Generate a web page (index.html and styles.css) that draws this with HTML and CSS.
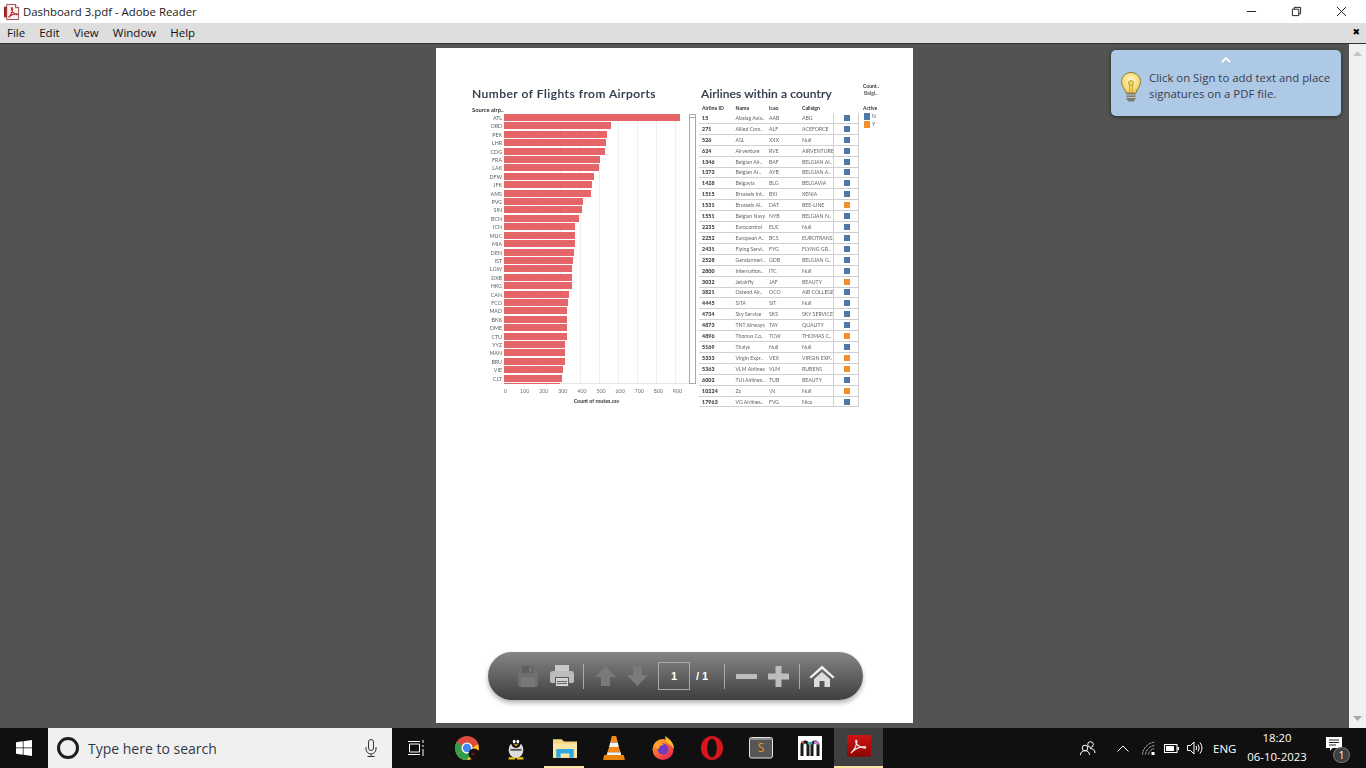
FILE: index.html
```html
<!DOCTYPE html>
<html lang="en">
<head>
<meta charset="utf-8">
<title>Dashboard 3.pdf - Adobe Reader</title>
<link rel="stylesheet" href="styles.css">
</head>
<body>
<header class="titlebar">
  <svg class="app-icon" viewBox="0 0 18 18"><path d="M3 .5h10l3.500 3.500v13.500H3z" fill="#f4f1ee" stroke="#8e3a38"/><path d="M13 .5v3.500h3.500" fill="#fff" stroke="#8e3a38"/><path d="M0 3h3v12H0z" fill="#a32020"/><path d="M5 15c2-1 3.500-5 4.500-9 0-2-1-3-1-1 0 3 2.500 6 6 7 1 0 1-1 0-1-3 0-6 1-8.500 3-1 1-1 1-1 1z" fill="none" stroke="#c0262a" stroke-width="1.300"/></svg>
  <span class="doc-title">Dashboard 3.pdf - Adobe Reader</span>
  <div class="winctl">
    <svg viewBox="0 0 12 12"><path d="M1 6h10" stroke="#111" fill="none"/></svg>
    <svg viewBox="0 0 12 12"><path d="M1.500 3.500h7v7h-7zM3.500 3.500v-2h7v7h-2" stroke="#111" fill="none"/></svg>
    <svg viewBox="0 0 12 12"><path d="M1 1l10 10M11 1L1 11" stroke="#111" fill="none"/></svg>
  </div>
</header>
<nav class="menubar">
  <span>File</span><span>Edit</span><span>View</span><span>Window</span><span>Help</span>
  <b class="menu-close">&#10006;</b>
</nav>
<main class="workspace">
  <div class="docarea">
    <section class="page">
      <div class="dash">
        <div class="chart">
          <h2 class="dash-title">Number of Flights from Airports</h2>
          <div class="field-label">Source airp..</div>
          <div class="chart-body">
            <div class="plot-wrap">
              <div class="grid"><i></i><i></i><i></i><i></i><i></i><i></i><i></i><i></i><i></i></div>
              <div class="rows">
                <div class="row"><span class="code">ATL</span><span class="bar" style="width:176px"></span></div>
                <div class="row"><span class="code">ORD</span><span class="bar" style="width:107px"></span></div>
                <div class="row"><span class="code">PEK</span><span class="bar" style="width:103px"></span></div>
                <div class="row"><span class="code">LHR</span><span class="bar" style="width:102px"></span></div>
                <div class="row"><span class="code">CDG</span><span class="bar" style="width:101px"></span></div>
                <div class="row"><span class="code">FRA</span><span class="bar" style="width:96px"></span></div>
                <div class="row"><span class="code">LAX</span><span class="bar" style="width:95px"></span></div>
                <div class="row"><span class="code">DFW</span><span class="bar" style="width:90px"></span></div>
                <div class="row"><span class="code">JFK</span><span class="bar" style="width:88px"></span></div>
                <div class="row"><span class="code">AMS</span><span class="bar" style="width:87px"></span></div>
                <div class="row"><span class="code">PVG</span><span class="bar" style="width:79px"></span></div>
                <div class="row"><span class="code">SIN</span><span class="bar" style="width:78px"></span></div>
                <div class="row"><span class="code">BCN</span><span class="bar" style="width:75px"></span></div>
                <div class="row"><span class="code">ICN</span><span class="bar" style="width:71px"></span></div>
                <div class="row"><span class="code">MUC</span><span class="bar" style="width:71px"></span></div>
                <div class="row"><span class="code">MIA</span><span class="bar" style="width:71px"></span></div>
                <div class="row"><span class="code">DEN</span><span class="bar" style="width:70px"></span></div>
                <div class="row"><span class="code">IST</span><span class="bar" style="width:69px"></span></div>
                <div class="row"><span class="code">LGW</span><span class="bar" style="width:68px"></span></div>
                <div class="row"><span class="code">DXB</span><span class="bar" style="width:68px"></span></div>
                <div class="row"><span class="code">HKG</span><span class="bar" style="width:68px"></span></div>
                <div class="row"><span class="code">CAN</span><span class="bar" style="width:65px"></span></div>
                <div class="row"><span class="code">FCO</span><span class="bar" style="width:64px"></span></div>
                <div class="row"><span class="code">MAD</span><span class="bar" style="width:63px"></span></div>
                <div class="row"><span class="code">BKK</span><span class="bar" style="width:63px"></span></div>
                <div class="row"><span class="code">DME</span><span class="bar" style="width:63px"></span></div>
                <div class="row"><span class="code">CTU</span><span class="bar" style="width:63px"></span></div>
                <div class="row"><span class="code">YYZ</span><span class="bar" style="width:61px"></span></div>
                <div class="row"><span class="code">MAN</span><span class="bar" style="width:61px"></span></div>
                <div class="row"><span class="code">BRU</span><span class="bar" style="width:61px"></span></div>
                <div class="row"><span class="code">VIE</span><span class="bar" style="width:59px"></span></div>
                <div class="row"><span class="code">CLT</span><span class="bar" style="width:58px"></span></div>
                <div class="row"><span class="code"></span><span class="bar" style="width:56px"></span></div>
              </div>
            </div>
            <div class="chart-scroll"><i></i></div>
          </div>
          <div class="axis"><span>0</span><span>100</span><span>200</span><span>300</span><span>400</span><span>500</span><span>600</span><span>700</span><span>800</span><span>900</span></div>
          <div class="axis-title">Count of routes.csv</div>
        </div>
        <div class="airlines">
          <h2 class="dash-title table-title">Airlines within a country</h2>
          <div class="tr thead"><span>Airline ID</span><span>Name</span><span>Icao</span><span>Callsign</span><span></span></div>
          <div class="tbody">
            <div class="tr"><b>15</b><span>Abelag Avia..</span><span>AAB</span><span>ABG</span><span class="cell-mark"><i class="mark n"></i></span></div>
            <div class="tr"><b>271</b><span>Allied Com..</span><span>ALF</span><span>ACEFORCE</span><span class="cell-mark"><i class="mark n"></i></span></div>
            <div class="tr"><b>526</b><span>ASL</span><span>XXX</span><span>Null</span><span class="cell-mark"><i class="mark n"></i></span></div>
            <div class="tr"><b>624</b><span>Airventure</span><span>RVE</span><span>AIRVENTURE</span><span class="cell-mark"><i class="mark n"></i></span></div>
            <div class="tr"><b>1346</b><span>Belgian Air..</span><span>BAF</span><span>BELGIAN AI..</span><span class="cell-mark"><i class="mark n"></i></span></div>
            <div class="tr"><b>1373</b><span>Belgian Ar..</span><span>AYB</span><span>BELGIAN A..</span><span class="cell-mark"><i class="mark n"></i></span></div>
            <div class="tr"><b>1428</b><span>Belgavia</span><span>BLG</span><span>BELGAVIA</span><span class="cell-mark"><i class="mark n"></i></span></div>
            <div class="tr"><b>1515</b><span>Brussels Int..</span><span>BXI</span><span>XENIA</span><span class="cell-mark"><i class="mark n"></i></span></div>
            <div class="tr"><b>1531</b><span>Brussels Al..</span><span>DAT</span><span>BEE-LINE</span><span class="cell-mark"><i class="mark y"></i></span></div>
            <div class="tr"><b>1551</b><span>Belgian Navy</span><span>NYB</span><span>BELGIAN N..</span><span class="cell-mark"><i class="mark n"></i></span></div>
            <div class="tr"><b>2235</b><span>Eurocontrol</span><span>EUC</span><span>Null</span><span class="cell-mark"><i class="mark n"></i></span></div>
            <div class="tr"><b>2252</b><span>European A..</span><span>BCS</span><span>EUROTRANS</span><span class="cell-mark"><i class="mark n"></i></span></div>
            <div class="tr"><b>2431</b><span>Flying Servi..</span><span>FYG</span><span>FLYING GR..</span><span class="cell-mark"><i class="mark n"></i></span></div>
            <div class="tr"><b>2528</b><span>Gendarmeri..</span><span>GDB</span><span>BELGIAN G..</span><span class="cell-mark"><i class="mark n"></i></span></div>
            <div class="tr"><b>2800</b><span>Internation..</span><span>ITC</span><span>Null</span><span class="cell-mark"><i class="mark n"></i></span></div>
            <div class="tr"><b>3032</b><span>Jetairfly</span><span>JAF</span><span>BEAUTY</span><span class="cell-mark"><i class="mark y"></i></span></div>
            <div class="tr"><b>3821</b><span>Ostend Air..</span><span>OCO</span><span>AIR COLLEGE</span><span class="cell-mark"><i class="mark n"></i></span></div>
            <div class="tr"><b>4445</b><span>SITA</span><span>SIT</span><span>Null</span><span class="cell-mark"><i class="mark n"></i></span></div>
            <div class="tr"><b>4734</b><span>Sky Service</span><span>SKS</span><span>SKY SERVICE</span><span class="cell-mark"><i class="mark n"></i></span></div>
            <div class="tr"><b>4873</b><span>TNT Airways</span><span>TAY</span><span>QUALITY</span><span class="cell-mark"><i class="mark n"></i></span></div>
            <div class="tr"><b>4896</b><span>Thomas Co..</span><span>TCW</span><span>THOMAS C..</span><span class="cell-mark"><i class="mark y"></i></span></div>
            <div class="tr"><b>5169</b><span>Thalys</span><span>Null</span><span>Null</span><span class="cell-mark"><i class="mark n"></i></span></div>
            <div class="tr"><b>5333</b><span>Virgin Expr..</span><span>VEX</span><span>VIRGIN EXP..</span><span class="cell-mark"><i class="mark y"></i></span></div>
            <div class="tr"><b>5363</b><span>VLM Airlines</span><span>VLM</span><span>RUBENS</span><span class="cell-mark"><i class="mark y"></i></span></div>
            <div class="tr"><b>6002</b><span>TUI Airlines..</span><span>TUB</span><span>BEAUTY</span><span class="cell-mark"><i class="mark n"></i></span></div>
            <div class="tr"><b>10224</b><span>Zz</span><span>\N</span><span>Null</span><span class="cell-mark"><i class="mark y"></i></span></div>
            <div class="tr"><b>17963</b><span>VG Airlines..</span><span>FVG</span><span>Nico</span><span class="cell-mark"><i class="mark n"></i></span></div>
          </div>
        </div>
        <aside class="legend">
          <div class="legend-count">Count..</div>
          <div class="legend-country">Belgi..</div>
          <div class="legend-head">Active</div>
          <div class="legend-item"><i class="swatch n"></i>N</div>
          <div class="legend-item"><i class="swatch y"></i>Y</div>
        </aside>
      </div>

      <div class="reader-bar">
        <svg class="tb save" viewBox="0 0 20 21"><path d="M0 2q0-2 2-2h14l4 4v15q0 2-2 2H2q-2 0-2-2z" fill="#6e6e6e"/><path d="M4 0h11v7H4z" fill="#5f5f5f"/><path d="M11 1h3v5h-3z" fill="#747474"/><path d="M3 11h14v10H3z" fill="#777"/></svg>
        <svg class="tb print" viewBox="0 0 24 22"><path d="M5 0h14v8H5z" fill="#c9c9c9"/><path d="M3 6h18q3 0 3 3v7q0 2-3 2H3q-3 0-3-2V9q0-3 3-3z" fill="#bcbcbc"/><path d="M5 12h14v10H5z" fill="#5a5a5a"/><path d="M6 13h12v8H6z" fill="#d2d2d2"/><path d="M7 16h10v1H7zM7 18h10v1H7z" fill="#666"/></svg>
        <i class="tb-sep"></i>
        <svg class="tb arrow" viewBox="0 0 21 20"><path d="M10.500 0L21 11h-6v9H6v-9H0z" fill="#7a7a7a"/></svg>
        <svg class="tb arrow" viewBox="0 0 21 20"><path d="M6 0h9v9h6L10.500 20 0 9h6z" fill="#7a7a7a"/></svg>
        <span class="page-box">1</span>
        <span class="page-total"><b>/</b> 1</span>
        <i class="tb-sep"></i>
        <svg class="tb zoom-out" viewBox="0 0 21 5"><path d="M0 0h21v5H0z" fill="#bdbdbd"/></svg>
        <svg class="tb zoom-in" viewBox="0 0 21 21"><path d="M7.500 0h6v7.500H21v6h-7.500V21h-6v-7.500H0v-6h7.500z" fill="#bdbdbd"/></svg>
        <i class="tb-sep"></i>
        <svg class="tb home" viewBox="0 0 26 22"><path d="M13 .500L25.500 12l-1.500 1.500L13 4 2 13.500.5 12z" fill="#f0f0f0"/><path d="M13 7l8 7v8h-5.500v-6h-5v6H5v-8z" fill="#dcdcdc"/></svg>
      </div>
    </section>
  </div>
  <div class="vscroll">
    <svg viewBox="0 0 9 6"><path d="M0 6l4.500-5L9 6z" fill="#c4c4c4"/></svg>
    <svg viewBox="0 0 9 6"><path d="M0 0l4.500 5L9 0z" fill="#a8a8a8"/></svg>
  </div>

  <aside class="tip">
    <svg class="tip-chevron" viewBox="0 0 10 6"><path d="M1 5l4-4 4 4" fill="none" stroke="#fff" stroke-width="1.800"/></svg>
    <div class="tip-body">
      <svg class="bulb" viewBox="0 0 20 30"><defs><radialGradient id="bg" cx=".5" cy=".4" r=".6"><stop offset="0" stop-color="#fffbd0"/><stop offset="1" stop-color="#f2cb52"/></radialGradient></defs><path d="M10 .5c5 0 9.500 3.500 9.500 9 0 5-3.500 7-4.500 11.500H5C4 16.500.5 14.500.5 9.500c0-5.500 4.500-9 9.500-9z" fill="url(#bg)" stroke="#8c7a3c"/><circle cx="10" cy="11" r="2.500" fill="#f0d060" stroke="#c8a030"/><path d="M8.500 13l.5 8M11.500 13l-.5 8" stroke="#c8a030" fill="none"/><path d="M5.500 21h9v6l-2 2.500h-5l-2-2.500z" fill="#7a7a72"/><path d="M5.500 23h9M5.500 25.500h9" stroke="#c6c6bc"/></svg>
      <p class="tip-text">Click on Sign to add text and place signatures on a PDF file.</p>
    </div>
  </aside>
</main>
<footer class="taskbar">
  <div class="start"><svg viewBox="0 0 16 16"><path d="M0 2.300l6.800-1v6.300H0zM7.500 1.200L16 0v7.600H7.500zM0 8.300h6.800v6.400l-6.800-1zM7.500 8.300H16V16l-8.500-1.200z" fill="#fff"/></svg></div>
  <div class="search">
    <i class="cortana"></i>
    <span class="search-text">Type here to search</span>
    <svg class="mic" viewBox="0 0 12 18"><rect x="3.500" y=".5" width="5" height="11" rx="2.500" fill="none" stroke="#333"/><path d="M1 8v2a5 5 0 0 0 10 0V8M6 15v2M2.500 17.500h7" fill="none" stroke="#333"/></svg>
  </div>
  <div class="slot taskview"><svg viewBox="0 0 16 16"><path d="M1.500 4h10v8h-10zM0 1.500h12M0 14.500h12M15 0v3M15 5v2M15 9v7" fill="none" stroke="#fff"/></svg></div>
  <div class="apps">
    <div class="slot">
      <svg viewBox="0 0 24 24"><circle cx="12" cy="12" r="12" fill="#dd4b3e"/><path d="M12 12L1.600 18A12 12 0 0 1 1.600 6z" fill="#2f9e48"/><path d="M12 24A12 12 0 0 1 1.600 18L6.800 15 12 12l5 0 6-4A12 12 0 0 1 12 24z" fill="#f6c62d"/><path d="M12 12l-5.200 3-5.200 3A12 12 0 0 0 12 24l5-9z" fill="#2f9e48"/><circle cx="12" cy="12" r="5.500" fill="#fff"/><circle cx="12" cy="12" r="4.200" fill="#4285f4"/><circle cx="19" cy="18" r="5.500" fill="#1a1010"/><circle cx="18" cy="18" r="1.500" fill="#5e2020"/></svg>
    </div>
    <div class="slot">
      <svg viewBox="0 0 24 26"><ellipse cx="12" cy="15" rx="8" ry="9" fill="#dcdcdc"/><ellipse cx="12" cy="6.500" rx="5.500" ry="6.500" fill="#111"/><path d="M4 12L1 16M20 12l3 4" stroke="#111" stroke-width="2"/><ellipse cx="10" cy="6" rx="1.500" ry="2" fill="#fff"/><ellipse cx="14" cy="6" rx="1.500" ry="2" fill="#fff"/><path d="M9.500 9h5l-2.500 2z" fill="#f1b81a"/><path d="M6 14h12v2H6z" fill="#555"/><path d="M4 23h7v2.500H4zM13 23h7v2.500h-7z" fill="#f1c40f"/></svg>
    </div>
    <div class="slot running">
      <svg viewBox="0 0 22 18"><path d="M0 1h8l2 2h12v15H0z" fill="#f6d77e"/><path d="M0 5h22v13H0z" fill="#fbe6a4"/><path d="M3 10h16v8h-4v-4H7v4H3z" fill="#2fa8e0"/></svg>
    </div>
    <div class="slot">
      <svg viewBox="0 0 20 22"><path d="M8 0h4l1.500 6h-7z" fill="#f28a1a"/><path d="M6.500 6h7l1 4h-9z" fill="#f3f3f3"/><path d="M5.500 10h9l1.500 5H4z" fill="#f28a1a"/><path d="M4 15h12l.7 2.500H3.300z" fill="#f3f3f3"/><path d="M1 17.500h18l1 4.500H0z" fill="#ee8410"/></svg>
    </div>
    <div class="slot">
      <svg viewBox="0 0 24 24"><defs><linearGradient id="ff" x1="0" y1="0" x2=".7" y2="1"><stop offset="0" stop-color="#ffcf32"/><stop offset=".5" stop-color="#ff6a2b"/><stop offset="1" stop-color="#e6255e"/></linearGradient></defs><circle cx="12" cy="13.500" r="10.500" fill="url(#ff)"/><path d="M14 0c5 3 9 7 9 13-3-4-6-6-8-7z" fill="#ffbd2e"/><circle cx="12" cy="13" r="5.500" fill="#6f3dc2"/><path d="M5 8c3-2 6-1 8 1-3 0-5 1-5 4l-3-1z" fill="#ffa630"/></svg>
    </div>
    <div class="slot">
      <svg viewBox="0 0 22 24"><ellipse cx="11" cy="12" rx="11" ry="12" fill="#d9161f"/><ellipse cx="11" cy="12" rx="4.800" ry="9.500" fill="#111"/></svg>
    </div>
    <div class="slot">
      <svg viewBox="0 0 24 22"><rect x=".5" y=".5" width="23" height="20.500" rx="2" fill="#565656" stroke="#e4e4e4"/><path d="M1 1h22v2H1z" fill="#8c8c8c"/><text class="sublime-s" x="12" y="15" text-anchor="middle">S</text></svg>
    </div>
    <div class="slot">
      <svg viewBox="0 0 24 24"><rect width="24" height="24" fill="#fff"/><path d="M4 20V9a3 3 0 0 1 6 0v11" fill="none" stroke="#1b1b1b" stroke-width="3"/><path d="M14 20V9a3 3 0 0 1 6 0v11" fill="none" stroke="#1b1b1b" stroke-width="3"/><path d="M10 8a3 3 0 0 1 4 0" fill="none" stroke="#35b3a5" stroke-width="2.500"/><path d="M16 6.500h3l1 2" fill="none" stroke="#d77fd8" stroke-width="2.500"/><path d="M4 6.800l2-1" stroke="#e84d4d" stroke-width="2.500"/></svg>
    </div>
    <div class="slot active">
      <svg viewBox="0 0 22 22"><defs><linearGradient id="ad" x1="0" y1="0" x2="0" y2="1"><stop offset="0" stop-color="#d01515"/><stop offset="1" stop-color="#8c0404"/></linearGradient></defs><rect width="22" height="20" rx="1.500" fill="url(#ad)"/><path d="M4 16c2-1.500 4-5 5-9 .3-2-.8-3-1-1.500-.3 2.500 3 6 8 6.500 1.500 0 1.500-1.300 0-1.300-3.500 0-8 1.800-11 4.500-1 .8-1 1-1 .8z" fill="none" stroke="#f3dede" stroke-width="1.200"/></svg>
    </div>
  </div>
  <div class="tray">
    <svg class="t-people" viewBox="0 0 16 15"><circle cx="10.500" cy="3.500" r="2.800" fill="none" stroke="#fff"/><circle cx="5" cy="7" r="2.800" fill="none" stroke="#fff"/><path d="M.5 14c0-3 2-4.300 4.500-4.300S9.500 11 9.500 14M10 7.500c3 0 5 1.500 5 4.500" fill="none" stroke="#fff"/></svg>
    <svg class="t-chev" viewBox="0 0 12 7"><path d="M.5 6.500L6 1l5.500 5.500" fill="none" stroke="#fff"/></svg>
    <svg class="t-net" viewBox="0 0 13 14"><path d="M.5 13.500C1 7 6 2 12.500 1M3.500 13.500C4 9 8 5 12.500 4.500M6.500 13.500c.5-3 3-5.500 6-6" fill="none" stroke="#c8c8c8" stroke-dasharray="1.200 .6"/><rect x="9.500" y="11" width="3" height="3" fill="#fff"/></svg>
    <svg class="t-bat" viewBox="0 0 15 9"><rect x=".5" y=".5" width="12.500" height="8" fill="none" stroke="#fff"/><rect x="2" y="2" width="8" height="5" fill="#fff"/><rect x="13.500" y="3" width="1.500" height="3" fill="#fff"/></svg>
    <svg class="t-vol" viewBox="0 0 16 14"><path d="M.5 4.500h3L7 1v12L3.500 9.500h-3z" fill="none" stroke="#fff"/><path d="M9 5q1.500 2 0 4M11 3.500q2.500 3.500 0 7M13 1.500q4 5.500 0 11" fill="none" stroke="#fff"/></svg>
    <span class="t-lang">ENG</span>
    <div class="t-clock"><span>18:20</span><span>06-10-2023</span></div>
    <div class="t-notif">
      <svg viewBox="0 0 16 14"><path d="M0 0h16v11H6.500L4 14v-3H0z" fill="#fff"/><path d="M3 3h10M3 5.500h10M3 8h7" stroke="#222"/></svg>
      <span class="t-badge">1</span>
    </div>
  </div>
</footer>
</body>
</html>
```
FILE: styles.css
```css
* { box-sizing: border-box; }
html, body { margin: 0; height: 768px; overflow: hidden; }
body {
  display: flex;
  flex-direction: column;
  width: 1366px;
  font-family: "Open Sans", "Noto Sans", sans-serif;
  background: #535353;
}
h2, p { margin: 0; }
i { display: block; }

.titlebar {
  height: 23px;
  background: #fff;
  display: flex;
  align-items: center;
  padding-left: 4px;
  flex: none;
}
.app-icon { width: 16px; height: 18px; }
.doc-title { margin-left: 3px; font-size: 11.400px; color: #1a1a1a; }
.winctl { margin-left: auto; display: flex; align-items: center; }
.winctl svg { width: 11px; height: 11px; margin-right: 34px; }
.winctl svg:last-child { margin-right: 19px; }

.menubar {
  height: 21px;
  flex: none;
  background: #dedede;
  border-bottom: 1px solid #333;
  display: flex;
  align-items: center;
  padding: 0 6px 2px 7px;
  font-size: 11.500px;
  color: #111;
  gap: 14px;
}
.menu-close { margin-left: auto; font: 700 9px "DejaVu Sans", sans-serif; color: #000; }

.workspace {
  position: relative;
  flex: 1;
  min-height: 0;
  display: flex;
}
.docarea {
  flex: 1;
  display: flex;
  justify-content: center;
  padding-top: 4px;
}
.vscroll {
  width: 17px;
  background: #f0f0f0;
  display: flex;
  flex-direction: column;
  justify-content: space-between;
  align-items: center;
  padding: 6px 0;
}
.vscroll svg { width: 9px; height: 6px; }

.page {
  position: relative;
  width: 477px;
  height: 675px;
  background: #fff;
  padding: 37px 0 0 36px;
}
.dash { display: flex; filter: blur(.35px); }
.dash-title {
  font: 500 12px/17px Lato, sans-serif;
  color: #2f3a48;
  letter-spacing: .5px;
  white-space: nowrap;
  -webkit-text-stroke: .2px #2f3a48;
}

.chart { width: 227px; }
.field-label {
  font: 700 5.800px/8px Lato, sans-serif;
  color: #333;
  height: 12px;
  padding-top: 4px;
}
.chart-body { display: flex; }
.plot-wrap {
  position: relative;
  width: 217px;
  height: 270px;
  overflow: hidden;
}
.grid {
  position: absolute;
  left: 32px;
  right: 0;
  top: 0;
  bottom: 0;
  display: flex;
  border-bottom: 1px solid #e6e6e6;
}
.grid i { width: 19.150px; border-right: 1px solid #eee; }
.rows { position: relative; }
.row {
  display: flex;
  align-items: flex-start;
  height: 7px;
  margin-bottom: 1.420px;
}
.code {
  width: 32px;
  flex: none;
  padding: 1px 2px 0 0;
  text-align: right;
  font: 5.300px/7px Lato, sans-serif;
  color: #5c5c5c;
}
.bar { height: 7px; background: #e56569; }
.chart-scroll {
  width: 7px;
  height: 270px;
  border: 1px solid #aaa;
}
.chart-scroll i { height: 3px; border-bottom: 1px solid #aaa; }
.axis {
  display: flex;
  margin-left: 24px;
  height: 12px;
  padding-top: 4px;
}
.axis span {
  width: 19.100px;
  flex: none;
  text-align: center;
  font: 5.300px/7px Lato, sans-serif;
  color: #707070;
}
.axis-title {
  width: 217px;
  padding: 2px 0 0 32px;
  text-align: center;
  font: 700 5.300px/7px Lato, sans-serif;
  color: #333;
}

.airlines { width: 160px; }
.table-title { padding-left: 2px; letter-spacing: .1px; }
.tr {
  display: grid;
  grid-template-columns: 33.500px 33.500px 33px 31px 1fr;
  height: 10.920px;
  align-items: center;
  padding-left: 3px;
  border-bottom: 1.500px solid #d0d0d0;
  font: 5.200px/8px Lato, sans-serif;
  color: #666;
  white-space: nowrap;
}
.tr b { color: #444; letter-spacing: .15px; -webkit-text-stroke: .12px #444; }
.thead {
  height: 11px;
  border-bottom: 0;
  font-weight: 700;
  color: #333;
}
.tbody {
  border-right: 1.500px solid #d0d0d0;
  position: relative;
}
.cell-mark {
  height: 100%;
  border-left: 1.500px solid #d0d0d0;
  display: flex;
  align-items: center;
  justify-content: center;
  margin-right: -1px;
}
.mark { width: 6px; height: 6px; }
.n { background: #4e79a7; }
.y { background: #f28e2b; }

.legend {
  margin: -2px 0 0 4px;
  width: 40px;
  font: 5px/7px Lato, sans-serif;
  color: #333;
}
.legend-count { font-weight: 700; }
.legend-country { font-weight: 700; padding-left: 1px; color: #555; }
.legend-head { font-weight: 700; margin-top: 8px; }
.legend-item { display: flex; align-items: center; height: 8px; color: #555; gap: 2px; padding-left: 1px; }
.swatch { width: 6px; height: 7px; }

.reader-bar {
  position: absolute;
  left: 52px;
  top: 604px;
  width: 375px;
  height: 48px;
  border-radius: 24px;
  background: linear-gradient(#858585, #3f3f3f);
  box-shadow: 0 3px 5px rgba(0, 0, 0, .3);
  display: flex;
  align-items: center;
}
.tb { flex: none; display: block; }
.save { width: 20px; height: 21px; margin-left: 30px; }
.print { width: 24px; height: 22px; margin-left: 12px; }
.tb-sep { width: 1px; height: 25px; background: #aaa; flex: none; }
.print + .tb-sep { margin-left: 9px; }
.arrow { width: 21px; height: 20px; margin-left: 11px; }
.page-box {
  width: 32px;
  height: 28px;
  margin-left: 10px;
  border: 1px solid #aaa;
  display: flex;
  align-items: center;
  justify-content: center;
  font: 700 11px "Liberation Sans", sans-serif;
  color: #fff;
}
.page-total {
  width: 34px;
  padding-left: 6px;
  font: 700 11px "Liberation Sans", sans-serif;
  color: #fff;
  white-space: pre;
}
.zoom-out { width: 21px; height: 5px; margin-left: 11px; }
.zoom-in { width: 21px; height: 21px; margin-left: 11px; }
.zoom-in + .tb-sep { margin-left: 10px; }
.home { width: 26px; height: 22px; margin-left: 9px; }

.tip {
  position: absolute;
  left: 1111px;
  top: 6px;
  width: 230px;
  height: 66px;
  background: #adc9e5;
  border-radius: 5px;
  box-shadow: 0 1px 4px rgba(0, 0, 0, .5);
}
.tip-chevron { display: block; width: 10px; height: 6px; margin: 7px auto 0; }
.tip-body { display: flex; align-items: flex-start; padding: 7px 0 0 10px; }
.bulb { width: 20px; height: 30px; flex: none; margin-top: 2px; }
.tip-text {
  margin-left: 8px;
  font-size: 11.400px;
  line-height: 15.500px;
  color: #3c3c50;
}

.taskbar {
  flex: none;
  height: 40px;
  background: #101010;
  display: flex;
  align-items: center;
}
.start {
  width: 48px;
  height: 40px;
  display: flex;
  align-items: center;
  justify-content: center;
}
.start svg { width: 16px; height: 16px; }
.search {
  width: 344px;
  height: 40px;
  background: #f0f0f0;
  display: flex;
  align-items: center;
  padding-left: 9px;
}
.cortana {
  width: 22px;
  height: 22px;
  border-radius: 50%;
  border: 3px solid #1c1c1c;
}
.search-text { margin-left: 9px; font-size: 14px; color: #2e3b48; }
.mic { width: 12px; height: 18px; margin-left: auto; margin-right: 15px; }
.slot {
  position: relative;
  width: 49px;
  height: 40px;
  flex: none;
  display: flex;
  align-items: center;
  justify-content: center;
}
.slot svg { width: 24px; height: 24px; }
.taskview { margin-left: -1px; }
.taskview svg { width: 16px; height: 16px; }
.apps { display: flex; margin-left: 2px; }
.active { background: #3f3f3f; border-bottom: 2px solid #fbe6a4; }
.running::after {
  content: "";
  position: absolute;
  left: 4px;
  bottom: 0;
  width: 40px;
  height: 2px;
  background: #fbe6a4;
}
.sublime-s { font: 400 12px "Open Sans", sans-serif; fill: #f29024; }

.tray { flex: 1; display: flex; align-items: center; color: #fff; min-width: 0; }
.t-people { width: 16px; height: 15px; margin-left: 197px; }
.t-chev { width: 12px; height: 7px; margin-left: 21px; }
.t-net { width: 13px; height: 14px; margin-left: 13px; }
.t-bat { width: 15px; height: 9px; margin-left: 9px; }
.t-vol { width: 16px; height: 14px; margin-left: 8px; }
.t-lang { font-size: 11.500px; margin-left: 10px; width: 24px; }
.t-clock {
  width: 74px;
  margin: -2px 0 0 3px;
  display: flex;
  flex-direction: column;
  align-items: center;
  font-size: 11.400px;
  line-height: 19px;
}
.t-notif { position: relative; width: 24px; height: 24px; margin: 6px 0 0 12px; }
.t-notif svg { position: absolute; left: 0; top: -2px; width: 16px; height: 14px; }
.t-badge {
  position: absolute;
  right: 0;
  bottom: 0;
  width: 17px;
  height: 16px;
  border-radius: 50%;
  background: #3f3f3f;
  border: 1px solid #777;
  display: flex;
  align-items: center;
  justify-content: center;
  font-size: 10px;
}
```
